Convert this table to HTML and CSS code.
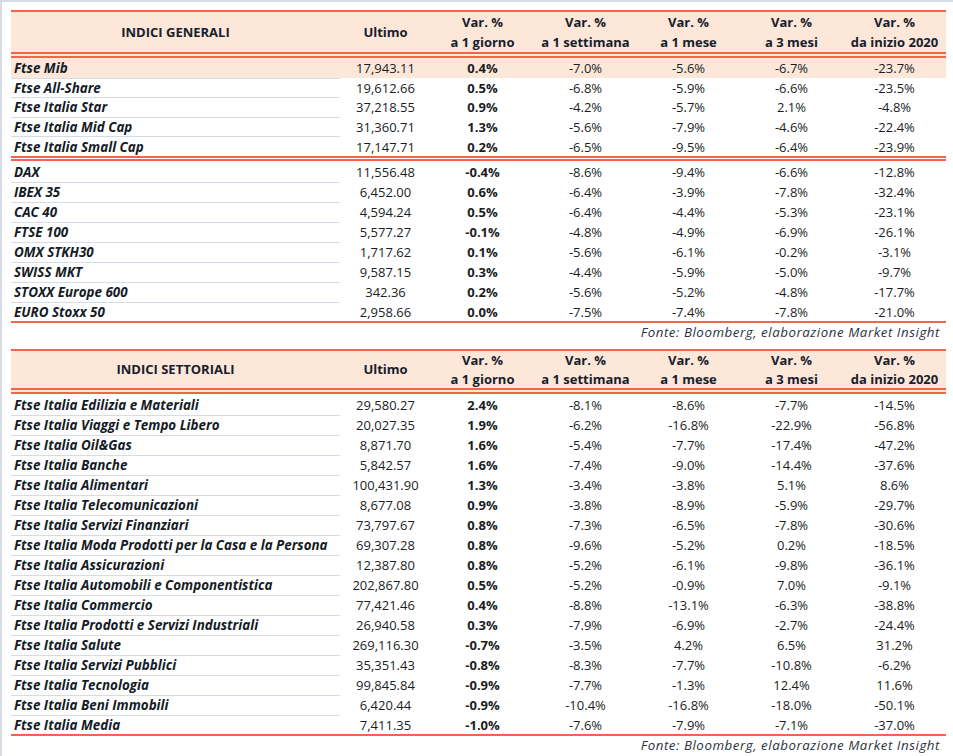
FILE: index.html
```html
<!DOCTYPE html>
<html lang="it">
<head>
<meta charset="utf-8">
<title>Indici</title>
<link rel="stylesheet" href="styles.css">
</head>
<body>
<div class="page">
  <section class="tbl t1">
    <div class="head">
      <div class="hc title">INDICI GENERALI</div>
      <div class="hc">Ultimo</div>
      <div class="hc"><span>Var. %</span><span>a 1 giorno</span></div>
      <div class="hc"><span>Var. %</span><span>a 1 settimana</span></div>
      <div class="hc"><span>Var. %</span><span>a 1 mese</span></div>
      <div class="hc"><span>Var. %</span><span>a 3 mesi</span></div>
      <div class="hc"><span>Var. %</span><span>da inizio 2020</span></div>
    </div>
    <div class="group g1">
      <div class="row hl"><div class="name">Ftse Mib</div><div>17,943.11</div><div class="b">0.4%</div><div>-7.0%</div><div>-5.6%</div><div>-6.7%</div><div>-23.7%</div></div>
      <div class="row"><div class="name">Ftse All-Share</div><div>19,612.66</div><div class="b">0.5%</div><div>-6.8%</div><div>-5.9%</div><div>-6.6%</div><div>-23.5%</div></div>
      <div class="row"><div class="name">Ftse Italia Star</div><div>37,218.55</div><div class="b">0.9%</div><div>-4.2%</div><div>-5.7%</div><div>2.1%</div><div>-4.8%</div></div>
      <div class="row"><div class="name">Ftse Italia Mid Cap</div><div>31,360.71</div><div class="b">1.3%</div><div>-5.6%</div><div>-7.9%</div><div>-4.6%</div><div>-22.4%</div></div>
      <div class="row"><div class="name">Ftse Italia Small Cap</div><div>17,147.71</div><div class="b">0.2%</div><div>-6.5%</div><div>-9.5%</div><div>-6.4%</div><div>-23.9%</div></div>
    </div>
    <div class="group g2">
      <div class="row"><div class="name">DAX</div><div>11,556.48</div><div class="b">-0.4%</div><div>-8.6%</div><div>-9.4%</div><div>-6.6%</div><div>-12.8%</div></div>
      <div class="row"><div class="name">IBEX 35</div><div>6,452.00</div><div class="b">0.6%</div><div>-6.4%</div><div>-3.9%</div><div>-7.8%</div><div>-32.4%</div></div>
      <div class="row"><div class="name">CAC 40</div><div>4,594.24</div><div class="b">0.5%</div><div>-6.4%</div><div>-4.4%</div><div>-5.3%</div><div>-23.1%</div></div>
      <div class="row"><div class="name">FTSE 100</div><div>5,577.27</div><div class="b">-0.1%</div><div>-4.8%</div><div>-4.9%</div><div>-6.9%</div><div>-26.1%</div></div>
      <div class="row"><div class="name">OMX STKH30</div><div>1,717.62</div><div class="b">0.1%</div><div>-5.6%</div><div>-6.1%</div><div>-0.2%</div><div>-3.1%</div></div>
      <div class="row"><div class="name">SWISS MKT</div><div>9,587.15</div><div class="b">0.3%</div><div>-4.4%</div><div>-5.9%</div><div>-5.0%</div><div>-9.7%</div></div>
      <div class="row"><div class="name">STOXX Europe 600</div><div>342.36</div><div class="b">0.2%</div><div>-5.6%</div><div>-5.2%</div><div>-4.8%</div><div>-17.7%</div></div>
      <div class="row"><div class="name">EURO Stoxx 50</div><div>2,958.66</div><div class="b">0.0%</div><div>-7.5%</div><div>-7.4%</div><div>-7.8%</div><div>-21.0%</div></div>
    </div>
    <p class="src">Fonte: Bloomberg, elaborazione Market Insight</p>
  </section>

  <section class="tbl t2">
    <div class="head">
      <div class="hc title">INDICI SETTORIALI</div>
      <div class="hc">Ultimo</div>
      <div class="hc"><span>Var. %</span><span>a 1 giorno</span></div>
      <div class="hc"><span>Var. %</span><span>a 1 settimana</span></div>
      <div class="hc"><span>Var. %</span><span>a 1 mese</span></div>
      <div class="hc"><span>Var. %</span><span>a 3 mesi</span></div>
      <div class="hc"><span>Var. %</span><span>da inizio 2020</span></div>
    </div>
    <div class="group g3">
      <div class="row"><div class="name">Ftse Italia Edilizia e Materiali</div><div>29,580.27</div><div class="b">2.4%</div><div>-8.1%</div><div>-8.6%</div><div>-7.7%</div><div>-14.5%</div></div>
      <div class="row"><div class="name">Ftse Italia Viaggi e Tempo Libero</div><div>20,027.35</div><div class="b">1.9%</div><div>-6.2%</div><div>-16.8%</div><div>-22.9%</div><div>-56.8%</div></div>
      <div class="row"><div class="name">Ftse Italia Oil&amp;Gas</div><div>8,871.70</div><div class="b">1.6%</div><div>-5.4%</div><div>-7.7%</div><div>-17.4%</div><div>-47.2%</div></div>
      <div class="row"><div class="name">Ftse Italia Banche</div><div>5,842.57</div><div class="b">1.6%</div><div>-7.4%</div><div>-9.0%</div><div>-14.4%</div><div>-37.6%</div></div>
      <div class="row"><div class="name">Ftse Italia Alimentari</div><div>100,431.90</div><div class="b">1.3%</div><div>-3.4%</div><div>-3.8%</div><div>5.1%</div><div>8.6%</div></div>
      <div class="row"><div class="name">Ftse Italia Telecomunicazioni</div><div>8,677.08</div><div class="b">0.9%</div><div>-3.8%</div><div>-8.9%</div><div>-5.9%</div><div>-29.7%</div></div>
      <div class="row"><div class="name">Ftse Italia Servizi Finanziari</div><div>73,797.67</div><div class="b">0.8%</div><div>-7.3%</div><div>-6.5%</div><div>-7.8%</div><div>-30.6%</div></div>
      <div class="row"><div class="name">Ftse Italia Moda Prodotti per la Casa e la Persona</div><div>69,307.28</div><div class="b">0.8%</div><div>-9.6%</div><div>-5.2%</div><div>0.2%</div><div>-18.5%</div></div>
      <div class="row"><div class="name">Ftse Italia Assicurazioni</div><div>12,387.80</div><div class="b">0.8%</div><div>-5.2%</div><div>-6.1%</div><div>-9.8%</div><div>-36.1%</div></div>
      <div class="row"><div class="name">Ftse Italia Automobili e Componentistica</div><div>202,867.80</div><div class="b">0.5%</div><div>-5.2%</div><div>-0.9%</div><div>7.0%</div><div>-9.1%</div></div>
      <div class="row"><div class="name">Ftse Italia Commercio</div><div>77,421.46</div><div class="b">0.4%</div><div>-8.8%</div><div>-13.1%</div><div>-6.3%</div><div>-38.8%</div></div>
      <div class="row"><div class="name">Ftse Italia Prodotti e Servizi Industriali</div><div>26,940.58</div><div class="b">0.3%</div><div>-7.9%</div><div>-6.9%</div><div>-2.7%</div><div>-24.4%</div></div>
      <div class="row"><div class="name">Ftse Italia Salute</div><div>269,116.30</div><div class="b">-0.7%</div><div>-3.5%</div><div>4.2%</div><div>6.5%</div><div>31.2%</div></div>
      <div class="row"><div class="name">Ftse Italia Servizi Pubblici</div><div>35,351.43</div><div class="b">-0.8%</div><div>-8.3%</div><div>-7.7%</div><div>-10.8%</div><div>-6.2%</div></div>
      <div class="row"><div class="name">Ftse Italia Tecnologia</div><div>99,845.84</div><div class="b">-0.9%</div><div>-7.7%</div><div>-1.3%</div><div>12.4%</div><div>11.6%</div></div>
      <div class="row"><div class="name">Ftse Italia Beni Immobili</div><div>6,420.44</div><div class="b">-0.9%</div><div>-10.4%</div><div>-16.8%</div><div>-18.0%</div><div>-50.1%</div></div>
      <div class="row"><div class="name">Ftse Italia Media</div><div>7,411.35</div><div class="b">-1.0%</div><div>-7.6%</div><div>-7.9%</div><div>-7.1%</div><div>-37.0%</div></div>
    </div>
    <p class="src">Fonte: Bloomberg, elaborazione Market Insight</p>
  </section>
</div>
</body>
</html>
```

FILE: styles.css
```css
* { box-sizing: border-box; }
html, body { margin: 0; padding: 0; background: #ffffff; }
body {
  font-family: "Open Sans", "DejaVu Sans", sans-serif;
  font-size: 13px;
  color: #1a1d24;
}
.page {
  min-height: 756px;
  border-top: 2px solid #d6dce5;
  border-left: 2px solid #d6dce5;
  padding: 8px 0 0 9px;
}
.tbl {
  width: 935px;
  border-top: 2px solid #f2654b;
}
.head, .row {
  display: grid;
  grid-template-columns: 329px 91px repeat(5, 103px);
}
.head {
  background: #fce7d9;
  font-weight: 700;
  border-bottom: 6px double #f2654b;
}
.t1 .head { height: 46px; }
.t2 .head { height: 43px; }
.hc {
  display: flex;
  flex-direction: column;
  align-items: center;
  justify-content: center;
  line-height: 20px;
  color: #16202c;
}
.t2 .hc { line-height: 19px; }
.row { height: 20px; }
.g1 .row { height: 19.6px; }
.row > div {
  text-align: center;
  line-height: 20px;
  padding-top: 1px;
  white-space: nowrap;
}
.row > .name {
  text-align: left;
  padding-left: 3px;
  font-weight: 700;
  font-style: italic;
  font-size: 13.4px;
  border-bottom: 1px solid #d6dce5;
  color: #141b26;
}
.row:last-child > .name { border-bottom: none; }
.g1 .row > div { line-height: 18.6px; }
.g1 .row:last-child > div { padding-top: 2px; }
.row > .b { font-weight: 700; }
.hl { background: #fce7d9; }
.g1 { border-bottom: 5px double #f2654b; }
.g2, .g3 { border-bottom: 2px solid #f2654b; }
.src {
  margin: 0;
  height: 26px;
  padding-right: 6px;
  padding-top: 1px;
  text-align: right;
  font-style: italic;
  font-size: 13.3px;
  letter-spacing: 0.55px;
  line-height: 17px;
  color: #2b3340;
}
```
